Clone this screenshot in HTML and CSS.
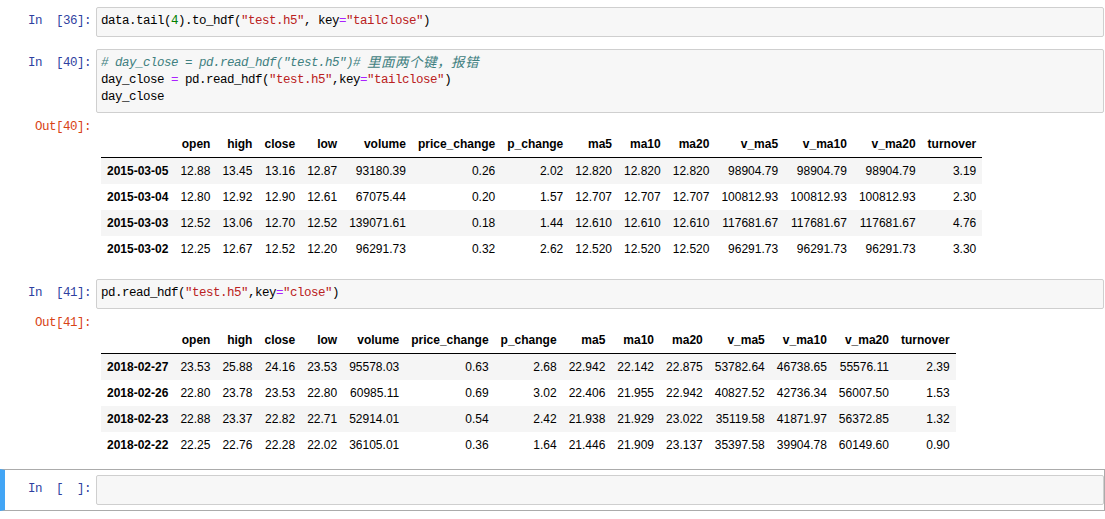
FILE: index.html
```html
<!DOCTYPE html>
<html lang="zh">
<head>
<meta charset="utf-8">
<title>Notebook</title>
<link rel="stylesheet" href="styles.css">
</head>
<body>
<div class="notebook">

  <div class="cell">
    <div class="row">
      <div class="prompt in">In&nbsp;&nbsp;[36]:</div>
      <div class="input-area">
        <div class="code">
          <div class="line">data.tail(<span class="n">4</span>).to_hdf(<span class="s">"test.h5"</span>, key<span class="o">=</span><span class="s">"tailclose"</span>)</div>
        </div>
      </div>
    </div>
  </div>

  <div class="cell">
    <div class="row">
      <div class="prompt in">In&nbsp;&nbsp;[40]:</div>
      <div class="input-area">
        <div class="code">
          <div class="line c"># day_close = pd.read_hdf("test.h5")# <span class="cjk">里面两个键，报错</span></div>
          <div class="line">day_close <span class="o">=</span> pd.read_hdf(<span class="s">"test.h5"</span>,key<span class="o">=</span><span class="s">"tailclose"</span>)</div>
          <div class="line">day_close</div>
        </div>
      </div>
    </div>
    <div class="row">
      <div class="prompt out">Out[40]:</div>
      <div class="output-sub">
        <table class="df">
          <thead>
            <tr><th></th><th>open</th><th>high</th><th>close</th><th>low</th><th>volume</th><th>price_change</th><th>p_change</th><th>ma5</th><th>ma10</th><th>ma20</th><th>v_ma5</th><th>v_ma10</th><th>v_ma20</th><th>turnover</th></tr>
          </thead>
          <tbody>
            <tr><th>2015-03-05</th><td>12.88</td><td>13.45</td><td>13.16</td><td>12.87</td><td>93180.39</td><td>0.26</td><td>2.02</td><td>12.820</td><td>12.820</td><td>12.820</td><td>98904.79</td><td>98904.79</td><td>98904.79</td><td>3.19</td></tr>
            <tr><th>2015-03-04</th><td>12.80</td><td>12.92</td><td>12.90</td><td>12.61</td><td>67075.44</td><td>0.20</td><td>1.57</td><td>12.707</td><td>12.707</td><td>12.707</td><td>100812.93</td><td>100812.93</td><td>100812.93</td><td>2.30</td></tr>
            <tr><th>2015-03-03</th><td>12.52</td><td>13.06</td><td>12.70</td><td>12.52</td><td>139071.61</td><td>0.18</td><td>1.44</td><td>12.610</td><td>12.610</td><td>12.610</td><td>117681.67</td><td>117681.67</td><td>117681.67</td><td>4.76</td></tr>
            <tr><th>2015-03-02</th><td>12.25</td><td>12.67</td><td>12.52</td><td>12.20</td><td>96291.73</td><td>0.32</td><td>2.62</td><td>12.520</td><td>12.520</td><td>12.520</td><td>96291.73</td><td>96291.73</td><td>96291.73</td><td>3.30</td></tr>
          </tbody>
        </table>
      </div>
    </div>
  </div>

  <div class="cell">
    <div class="row">
      <div class="prompt in">In&nbsp;&nbsp;[41]:</div>
      <div class="input-area">
        <div class="code">
          <div class="line">pd.read_hdf(<span class="s">"test.h5"</span>,key<span class="o">=</span><span class="s">"close"</span>)</div>
        </div>
      </div>
    </div>
    <div class="row">
      <div class="prompt out">Out[41]:</div>
      <div class="output-sub">
        <table class="df">
          <thead>
            <tr><th></th><th>open</th><th>high</th><th>close</th><th>low</th><th>volume</th><th>price_change</th><th>p_change</th><th>ma5</th><th>ma10</th><th>ma20</th><th>v_ma5</th><th>v_ma10</th><th>v_ma20</th><th>turnover</th></tr>
          </thead>
          <tbody>
            <tr><th>2018-02-27</th><td>23.53</td><td>25.88</td><td>24.16</td><td>23.53</td><td>95578.03</td><td>0.63</td><td>2.68</td><td>22.942</td><td>22.142</td><td>22.875</td><td>53782.64</td><td>46738.65</td><td>55576.11</td><td>2.39</td></tr>
            <tr><th>2018-02-26</th><td>22.80</td><td>23.78</td><td>23.53</td><td>22.80</td><td>60985.11</td><td>0.69</td><td>3.02</td><td>22.406</td><td>21.955</td><td>22.942</td><td>40827.52</td><td>42736.34</td><td>56007.50</td><td>1.53</td></tr>
            <tr><th>2018-02-23</th><td>22.88</td><td>23.37</td><td>22.82</td><td>22.71</td><td>52914.01</td><td>0.54</td><td>2.42</td><td>21.938</td><td>21.929</td><td>23.022</td><td>35119.58</td><td>41871.97</td><td>56372.85</td><td>1.32</td></tr>
            <tr><th>2018-02-22</th><td>22.25</td><td>22.76</td><td>22.28</td><td>22.02</td><td>36105.01</td><td>0.36</td><td>1.64</td><td>21.446</td><td>21.909</td><td>23.137</td><td>35397.58</td><td>39904.78</td><td>60149.60</td><td>0.90</td></tr>
          </tbody>
        </table>
      </div>
    </div>
  </div>

  <div class="cell selected">
    <div class="row">
      <div class="prompt in">In&nbsp;&nbsp;[&nbsp;&nbsp;]:</div>
      <div class="input-area">
        <div class="code">
          <div class="line">&nbsp;</div>
        </div>
      </div>
    </div>
  </div>

</div>
</body>
</html>
```
FILE: styles.css
```css
* {
  box-sizing: border-box;
}

html,
body {
  margin: 0;
  padding: 0;
  background: #ffffff;
}

body {
  width: 1105px;
  overflow: hidden;
}

.notebook {
  padding-top: 1px;
}

.cell {
  border: 1px solid transparent;
  padding: 5px 0 5px 5px;
}

.cell.selected {
  border-color: #ababab;
  border-left: 5px solid #42a5f5;
  padding-left: 1px;
}

.row {
  display: flex;
  align-items: flex-start;
}

.prompt {
  flex: none;
  width: 90px;
  padding: 6px 5px 0 0;
  text-align: right;
  font-family: "Liberation Mono", monospace;
  font-size: 12.5px;
  letter-spacing: -0.5px;
  line-height: 17px;
  white-space: pre;
}

.prompt.in {
  color: #303f9f;
}

.prompt.out {
  color: #d84315;
}

.input-area {
  flex: 1;
  min-width: 0;
  background: #f7f7f7;
  border: 1px solid #cfcfcf;
  border-radius: 2px;
  padding: 5px 4px 6px 4px;
}

.code {
  font-family: "Liberation Mono", monospace;
  font-size: 12.5px;
  letter-spacing: -0.5px;
  line-height: 17px;
  color: #000000;
}

.line {
  height: 17px;
  white-space: pre;
}

.code .s {
  color: #ba2121;
}

.code .o {
  color: #aa22ff;
}

.code .n {
  color: #008000;
}

.code .c {
  color: #408080;
  font-style: italic;
}

.code .cjk {
  font-family: "Noto Sans CJK SC", sans-serif;
  font-size: 13.5px;
  letter-spacing: 0.5px;
  line-height: 1;
  vertical-align: top;
}

.output-sub {
  flex: 1;
  min-width: 0;
  padding: 18px 0 5px 5px;
}

.df {
  border-collapse: collapse;
  border-spacing: 0;
  font-family: "Liberation Sans", Arial, sans-serif;
  font-size: 12px;
  color: #000000;
}

.df th,
.df td {
  padding: 6px;
  line-height: 14px;
  text-align: right;
  vertical-align: middle;
  white-space: nowrap;
  font-weight: normal;
}

.df th {
  font-weight: bold;
}

.df thead th {
  border-bottom: 1px solid #000000;
}

.df tbody tr:nth-child(odd) {
  background: #f5f5f5;
}
```
